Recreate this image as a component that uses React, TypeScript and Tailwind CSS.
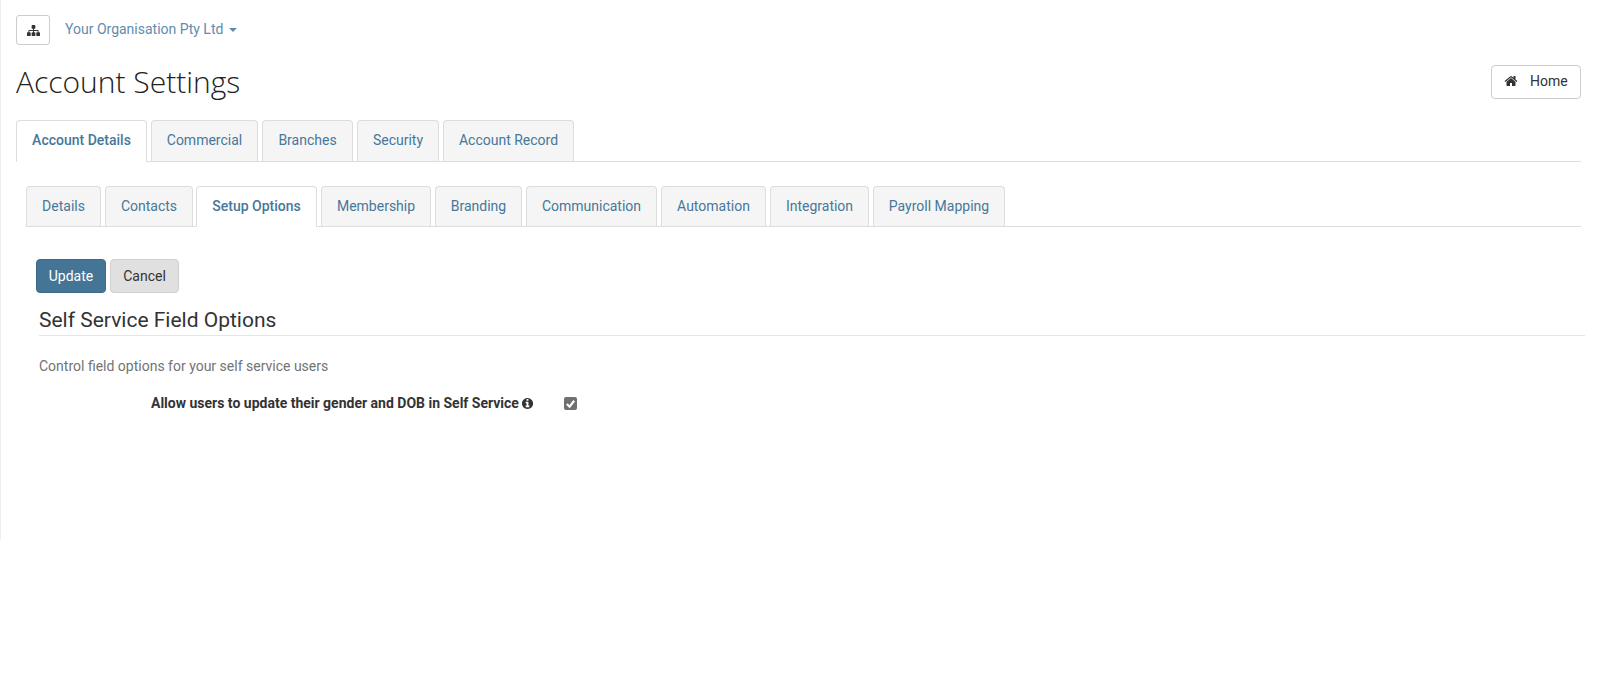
const mainTabs = [
  { label: "Account Details", width: "w-[131px]" },
  { label: "Commercial", width: "w-[107px]" },
  { label: "Branches", width: "w-[91px]" },
  { label: "Security", width: "w-[82px]" },
  { label: "Account Record", width: "w-[131px]" },
];

const subTabs = [
  { label: "Details", width: "w-[75px]" },
  { label: "Contacts", width: "w-[88px]" },
  { label: "Setup Options", width: "w-[121px] -ml-px" },
  { label: "Membership", width: "w-[110px]" },
  { label: "Branding", width: "w-[87px]" },
  { label: "Communication", width: "w-[131px]" },
  { label: "Automation", width: "w-[105px]" },
  { label: "Integration", width: "w-[99px]" },
  { label: "Payroll Mapping", width: "w-[132px]" },
];

// font awesome 4 glyphs, the newer sets in react-icons draw these differently
function SitemapIcon({ className }: { className: string }) {
  return (
    <svg viewBox="0 0 1792 1792" fill="currentColor" className={className}>
      <path d="M1792 1248v320q0 40-28 68t-68 28h-320q-40 0-68-28t-28-68v-320q0-40 28-68t68-28h96v-192h-512v192h96q40 0 68 28t28 68v320q0 40-28 68t-68 28h-320q-40 0-68-28t-28-68v-320q0-40 28-68t68-28h96v-192h-512v192h96q40 0 68 28t28 68v320q0 40-28 68t-68 28h-320q-40 0-68-28t-28-68v-320q0-40 28-68t68-28h96v-192q0-52 38-90t90-38h512v-192h-96q-40 0-68-28t-28-68v-320q0-40 28-68t68-28h320q40 0 68 28t28 68v320q0 40-28 68t-68 28h-96v192h512q52 0 90 38t38 90v192h96q40 0 68 28t28 68z" />
    </svg>
  );
}

function HomeIcon({ className }: { className: string }) {
  return (
    <svg viewBox="0 0 1792 1792" fill="currentColor" className={className}>
      <path d="M1472 992v480q0 26-19 45t-45 19h-384v-384h-256v384h-384q-26 0-45-19t-19-45v-480q0-1 .5-3t.5-3l575-474 575 474q1 2 1 6zm223-69l-62 74q-8 9-21 11h-3q-13 0-21-7l-692-577-692 577q-12 8-24 7-13-2-21-11l-62-74q-8-10-7-23.500t11-21.500l719-599q32-26 76-26t76 26l244 204v-195q0-14 9-23t23-9h192q14 0 23 9t9 23v408l219 182q10 8 11 21.500t-7 23.500z" />
    </svg>
  );
}

function InfoIcon({ className }: { className: string }) {
  return (
    <svg viewBox="0 0 1792 1792" fill="currentColor" className={className}>
      <path d="M1152 1376v-160q0-14-9-23t-23-9h-96v-512q0-14-9-23t-23-9h-320q-14 0-23 9t-9 23v160q0 14 9 23t23 9h96v320h-96q-14 0-23 9t-9 23v160q0 14 9 23t23 9h448q14 0 23-9t9-23zm-128-896v-160q0-14-9-23t-23-9h-192q-14 0-23 9t-9 23v160q0 14 9 23t23 9h192q14 0 23-9t9-23zm640 416q0 209-103 385.500t-279.500 279.500-385.500 103-385.500-103-279.500-279.500-103-385.500 103-385.500 279.500-279.500 385.500-103 385.500 103 279.500 279.500 103 385.500z" />
    </svg>
  );
}

function Tabs({ items, active, small }: { items: { label: string; width: string }[]; active: string; small?: boolean }) {
  const activeSize = small ? "h-[41px] pb-[1px]" : "h-[42px] pb-[2px]";
  const idleSize = small ? "h-[40px]" : "h-[41px] pb-[1px]";
  return (
    <ul className={small ? "flex gap-1 border-b border-[#dddddd] h-[41px]" : "flex gap-1 border-b border-[#dddddd] h-[42px]"}>
      {items.map((t) => (
        <li
          key={t.label}
          className={
            t.label === active
              ? `${t.width} ${activeSize} flex items-center justify-center bg-white border border-[#dddddd] border-b-white rounded-t-[4px] text-[#47779a] font-medium text-[14px]`
              : `${t.width} ${idleSize} flex items-center justify-center bg-[#f5f5f5] border border-[#dddddd] border-b-0 rounded-t-[4px] text-[#47779a] text-[14px]`
          }
        >
          {t.label}
        </li>
      ))}
    </ul>
  );
}

export default function App() {
  return (
    <div className="w-[1601px] h-[675px] overflow-hidden bg-white text-[#333333] font-['Roboto',sans-serif]">
      <div className="h-[540px] border-l border-[#eeeeee] pl-[15px] pr-[20px] pt-[15px]">
        <div className="flex items-center h-[30px]">
          <div className="w-[34px] h-[30px] border border-[#cccccc] rounded-[3px] flex items-center justify-center">
            <SitemapIcon className="w-[13px] h-[13px] text-[#333333]" />
          </div>
          <span className="ml-[15px] pb-[2px] text-[14px] text-[#5f8cae]">Your Organisation Pty Ltd</span>
          <span className="ml-[6px] w-0 h-0 border-x-[4px] border-x-transparent border-t-[4px] border-t-[#5f8cae]" />
        </div>

        <div className="flex justify-between mt-[20px] h-[34px]">
          <h1 className="font-['Open_Sans',sans-serif] font-light text-[30px] leading-[34px] text-[#222222]">Account Settings</h1>
          <div className="w-[90px] h-[34px] pb-[2px] border border-[#cccccc] rounded-[4px] flex items-center pl-[12px] text-[14px]">
            <HomeIcon className="w-[14px] h-[14px] text-[#333333]" />
            <span className="ml-[12px]">Home</span>
          </div>
        </div>

        <div className="mt-[21px]">
          <Tabs items={mainTabs} active="Account Details" />
        </div>

        <div className="mt-[24px] ml-[10px]">
          <Tabs items={subTabs} active="Setup Options" small />
        </div>

        <div className="flex gap-1 mt-[32px] ml-[20px] text-[14px]">
          <button className="w-[70px] h-[34px] bg-[#457596] border border-[#3d6a88] rounded-[4px] text-white">Update</button>
          <button className="w-[69px] h-[34px] bg-[#e0e0e0] border border-[#cfcfcf] rounded-[4px] text-[#333333]">Cancel</button>
        </div>

        <div className="ml-[23px] -mr-[4px]">
          <h2 className="mt-[12px] border-b border-[#e5e5e5] text-[21px] leading-[30px] text-[#333333]">Self Service Field Options</h2>
          <p className="mt-[20px] text-[14px] leading-[20px] text-[#737373]">Control field options for your self service users</p>
          <div className="flex items-center mt-[17px] ml-[112px] h-[20px]">
            <label className="text-[14px] font-bold text-[#333333]">Allow users to update their gender and DOB in Self Service</label>
            <InfoIcon className="ml-[2px] w-[13px] h-[13px] text-[#333333]" />
            <span className="ml-[30px] w-[13px] h-[13px] rounded-[2px] bg-[#707070] flex items-center justify-center">
              <svg viewBox="0 0 12 12" className="w-[11px] h-[11px]" fill="none" stroke="white" strokeWidth="2.400">
                <path d="M2 6.500 L5 9.500 L10 3" />
              </svg>
            </span>
          </div>
        </div>
      </div>
    </div>
  );
}
